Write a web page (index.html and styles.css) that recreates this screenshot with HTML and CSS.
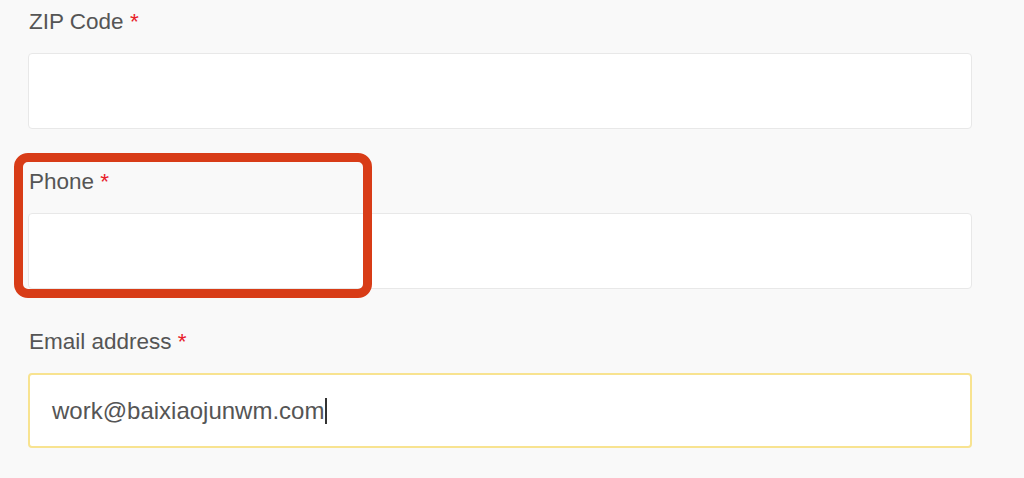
FILE: index.html
```html
<!DOCTYPE html>
<html>
<head>
<meta charset="utf-8">
<link rel="stylesheet" href="styles.css">
</head>
<body>
<div class="page">
  <form class="form">
    <div class="field">
      <label class="label">ZIP Code <span class="req">*</span></label>
      <div class="input"></div>
    </div>
    <div class="field">
      <label class="label">Phone <span class="req">*</span></label>
      <div class="input"></div>
    </div>
    <div class="field">
      <label class="label">Email address <span class="req">*</span></label>
      <div class="input focused"><span class="value">work@baixiaojunwm.com</span><span class="caret"></span></div>
    </div>
  </form>
  <div class="highlight"></div>
</div>
</body>
</html>
```

FILE: styles.css
```css
html, body {
  margin: 0;
  padding: 0;
  background: #f9f9f9;
}
.page {
  position: relative;
  width: 1024px;
  height: 478px;
  overflow: hidden;
  font-family: "Liberation Sans", Arial, sans-serif;
}
.form {
  display: flex;
  flex-direction: column;
  gap: 40px;
  padding: 9px 52px 0 28px;
}
.field {
  display: flex;
  flex-direction: column;
  gap: 18px;
}
.label {
  font-size: 22.5px;
  line-height: 26px;
  color: #555;
  padding-left: 1px;
}
.req {
  color: #e8202a;
}
.input {
  box-sizing: border-box;
  height: 76px;
  background: #fff;
  border: 1px solid #e8e8e8;
  border-radius: 4px;
  display: flex;
  align-items: center;
  padding-left: 23px;
}
.input.focused {
  height: 75px;
  border: 2px solid #f8e390;
  padding-left: 22px;
}
.value {
  font-size: 24px;
  color: #555;
}
.caret {
  width: 2px;
  height: 26px;
  background: #333;
  margin-left: 1px;
}
.highlight {
  position: absolute;
  left: 14px;
  top: 153px;
  width: 358px;
  height: 145px;
  box-sizing: border-box;
  border: 9px solid #d83c17;
  border-radius: 14px;
}
```
